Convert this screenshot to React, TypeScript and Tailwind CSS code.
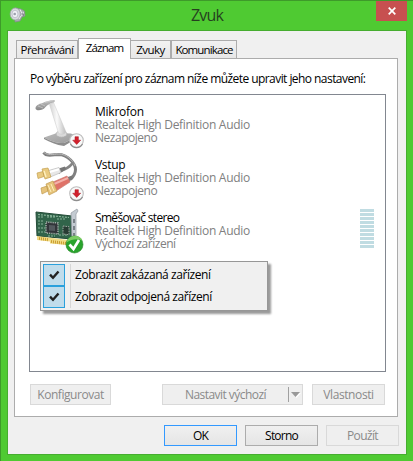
import React from "react";

const CONTROL = "flex h-[21px] items-center justify-center border text-[12px] leading-none whitespace-nowrap";
const TAB = "flex h-[18px] items-center justify-center border border-b-0 border-[#acacac] bg-gradient-to-b from-[#f2f2f2] to-[#e7e7e7]";

function DownBadge() {
  return (
    <g>
      <circle cx="42.5" cy="42.5" r="6.8" fill="#f8f8f8" stroke="#bdbdbd" strokeWidth="1.1" />
      <path d="M36.5 46a6.8 6.8 0 0 0 12 0" fill="none" stroke="#8e8e8e" strokeWidth="1.2" />
      <path d="M41 38.7h3.4v3.5h2.3l-4 4.3-4-4.3H41z" fill="#d2202c" stroke="#a9141f" strokeWidth=".5" />
    </g>
  );
}

function Microphone() {
  return (
    <svg width="50" height="53" viewBox="0 0 50 53" className="block">
      <defs>
        <linearGradient id="stem" x1="0" x2="1">
          <stop stopColor="#d0d0d0" /><stop offset=".45" stopColor="#fafafa" /><stop offset="1" stopColor="#bdbdbd" />
        </linearGradient>
        <linearGradient id="foot" x1="0" x2="1" y2="1">
          <stop stopColor="#bababa" /><stop offset="1" stopColor="#9a9a9a" />
        </linearGradient>
        <linearGradient id="head" x1="0" x2="0" y2="1">
          <stop stopColor="#c4c4c4" /><stop offset="1" stopColor="#858585" />
        </linearGradient>
      </defs>
      <path d="M10 39.5l13-4.5 14 .5 6 3-13 6.5c-8 0-14-2-20-5.5z" fill="url(#foot)" />
      <path d="M10 39.5c6 3.5 12 5.5 20 5.5l10-5v2l-10 6c-8-1-14-4-20-7z" fill="#8d8d8d" />
      <ellipse cx="27.5" cy="36" rx="5.5" ry="3.2" fill="#dadada" stroke="#ababab" strokeWidth=".7" />
      <path d="M15.5 6.5l4-2 12.500 29.500c-1.500 2.500-5 3-7.500 1z" fill="url(#stem)" stroke="#c8c8c8" strokeWidth=".5" />
      <path d="M1.500 10.500c0-3 3-4.500 7-5.500 4-1.800 8-3.200 12-3 .8.800.5 1.800-1 2.500-4 1-6 2.500-8 4.500-2.500 3.500-9.500 4.500-10 1.500z" fill="url(#head)" />
      <path d="M4 8l5 2M7 6l4 2M11 4.500l8-2" stroke="#cfcfcf" strokeWidth=".7" />
      <DownBadge />
    </svg>
  );
}

function LineIn() {
  return (
    <svg width="50" height="53" viewBox="0 0 50 53" className="block">
      <path d="M9.500 1.500c3 4 8 2.500 15 2 9 0 17 9 17 15 0 4-2 7-5 10" fill="none" stroke="#808080" strokeWidth="3" />
      <path d="M10 1.500c4 3 8 2 15 1.500 7 0 14 6 16 12" fill="none" stroke="#bdbdbd" strokeWidth=".9" />
      <path d="M39 11c-2 5-6 6-12 9" fill="none" stroke="#858585" strokeWidth="2.6" />
      <path d="M23 18l8-2.500 1 2.500-7 5z" fill="#777" />
      <path d="M13 20l12-3.500 2 5-12 5z" fill="#e7e7e7" stroke="#bbb" strokeWidth=".7" />
      <path d="M14 21.500l11-3.200" stroke="#fff" strokeWidth="2" />
      <path d="M3 22l6-1.500 1 5-6 2zM8 18l6-1 3 9-6 2z" fill="#e9ca80" stroke="#c4a050" strokeWidth=".7" />
      <path d="M10 20l2 6" stroke="#fff0be" strokeWidth="1.500" />
      <path d="M31 27l7-2.500 1 3-6 5z" fill="#777" />
      <path d="M19 31l14-6 3 6-14 9z" fill="#df7268" stroke="#cd8178" strokeWidth=".7" />
      <path d="M20 33l14-6" stroke="#f3b1a9" strokeWidth="2" />
      <path d="M7 37l6-2 1 5-6 3zM12 33l7-3 4 10-8 4z" fill="#e6c37b" stroke="#c19c50" strokeWidth=".7" />
      <path d="M14 34l3 7M17 33l3 7" stroke="#fff1bd" />
      <DownBadge />
    </svg>
  );
}

function SoundCard() {
  return (
    <svg width="50" height="53" viewBox="0 0 50 53" className="block">
      <path d="M2 8l36 4v23L3 32z" fill="#31644a" stroke="#244c38" />
      <path d="M4 10.500l31 3M4 13h6M13 13h8M23 15h8M4 17h5M4 20h6M4 24h7M4 28h7M25 31h8M14 32h7" stroke="#8ab49a" strokeWidth="1.2" strokeDasharray="2 1" />
      <path d="M12 18l12 1v11l-12-1z" fill="#32363a" stroke="#a4afa9" strokeWidth="1.500" strokeDasharray="1.2 1" />
      <path d="M15 21l6 .5V27l-6-.5z" fill="#535a5e" />
      <path d="M29 22l6 .7v8l-6-.7z" fill="#273c33" stroke="#a0aaa3" strokeDasharray="1.500 1" />
      <path d="M37 9l6-4 1 2-2 3v25l-4 3z" fill="#c4cbd2" stroke="#9399a0" strokeWidth=".7" />
      <path d="M40 15v4M40 22v4M40 29v3" stroke="#626970" strokeWidth="1.500" />
      <path d="M3 32l31 4v5L16 39.500v-2L3 36z" fill="#f2dc85" />
      <path d="M5 34.500l9 1.200M17 37.500l15 2" stroke="#c99b2e" strokeWidth="3" strokeDasharray="1 1" />
      <circle cx="40.500" cy="40.500" r="8.500" fill="#29a32c" stroke="#248526" strokeWidth=".6" />
      <path d="M32.500 38.500c2-8 13-9 16-2-5-2-10-2-16 2z" fill="#7bcc64" />
      <path d="M35.500 40.500l4 4.500 5.500-9" fill="none" stroke="#fff" strokeWidth="2.7" />
    </svg>
  );
}

function Device({ name, status, nameClass, statusClass, children }: {
  name: string; status: string; nameClass: string; statusClass: string; children: React.ReactNode;
}) {
  return (
    <div className="flex h-[53px]">
      <div className="w-[61px] shrink-0">{children}</div>
      <div className="flex flex-col whitespace-nowrap pt-[7px] text-[12px] leading-[13px] text-[#808080]">
        <span className={`text-black ${nameClass}`}>{name}</span>
        <span className="tracking-[-0.3px]">Realtek High Definition Audio</span>
        <span className={statusClass}>{status}</span>
      </div>
    </div>
  );
}

function MenuItem({ children }: { children: React.ReactNode }) {
  return (
    <div className="flex h-[22px]">
      <div className="flex w-[22px] items-center justify-center border border-[#2aa0dc] bg-[#c0dceb]">
        <svg width="11" height="10" viewBox="0 0 11 10"><path d="M1 4.6l3 3.2L9.500 1.500" fill="none" stroke="#222" strokeWidth="2.4" /></svg>
      </div>
      <div className="ml-[5px] w-px bg-[#d7d7d7]" />
      <span className="ml-1 whitespace-nowrap text-[12px] leading-[22px] tracking-[-0.43px]">{children}</span>
    </div>
  );
}

export default function App() {
  return (
    <main className="flex h-[461px] w-[413px] flex-col border-l border-t border-[#3e9a2a] bg-[#4fca32] font-['Open_Sans','Noto_Sans',sans-serif] text-black">
      <header className="flex h-[29px] shrink-0">
        <div className="w-[190px] pl-[8px] pt-[5px]">
          <svg width="18" height="17" viewBox="0 0 18 17">
            <path d="M6 2l6 1 3.500 2 .5 5-3 1-2 4-5 1z" fill="#a9adb2" stroke="#858a8c" strokeWidth=".7" />
            <ellipse cx="6.200" cy="8" rx="5" ry="6" fill="#d9dae0" stroke="#a3a6ae" strokeWidth=".8" />
            <ellipse cx="6" cy="8" rx="3" ry="3.800" fill="#f0f0f6" stroke="#b6b9c4" strokeWidth=".8" />
            <circle cx="5.700" cy="8" r="1.300" fill="#9ba0ad" />
            <path d="M11 3.500l2 4M14.500 6l-2 4M10 13l2-3" stroke="#e8eaec" />
            <path d="M13.500 7.500l1 2" stroke="#5d6266" />
          </svg>
        </div>
        <h1 className="w-[185px] pt-px text-[16px] leading-[27px] tracking-[-0.8px] text-[#263f20]">Zvuk</h1>
        <button className="flex h-5 w-[31px] items-center justify-center bg-[#c75050]" aria-label="Zavřít">
          <svg width="8" height="8" viewBox="0 0 8 8"><path d="M.7.7l6.6 6.6M7.3.7L.7 7.3" stroke="#fff" strokeWidth="1.700" /></svg>
        </button>
      </header>

      <section className="ml-[6px] h-[425px] w-[400px] shrink-0 border border-[#46ad2f] bg-[#f0f0f0] pl-[6px] pt-[7px]">
        <nav className="flex h-[20px] items-end whitespace-nowrap pl-[2px] text-[11.5px] leading-none">
          <div className={`${TAB} w-[62px] tracking-[-0.55px]`}>Přehrávání</div>
          <div className="relative z-10 -mb-px flex h-[21px] w-[53px] items-center justify-center border border-b-0 border-[#acacac] bg-white pb-[2px] tracking-[-0.8px]">Záznam</div>
          <div className={`${TAB} w-[40px] border-l-0 tracking-[-0.55px]`}>Zvuky</div>
          <div className={`${TAB} w-[66px] tracking-[-0.88px]`}>Komunikace</div>
        </nav>

        <div className="h-[359px] w-[384px] border border-[#acacac] bg-white pl-[14px] pt-[12px]">
          <p className="h-[23px] whitespace-nowrap pl-px text-[12px] leading-[15px] tracking-[-0.56px]">Po výběru zařízení pro záznam níže můžete upravit jeho nastavení:</p>
          <div className="relative h-[278px] w-[357px] border border-[#828790] bg-white pl-[4px] pt-[3px]">
            <Device name="Mikrofon" status="Nezapojeno" nameClass="tracking-[-0.25px]" statusClass="tracking-[-0.48px]"><Microphone /></Device>
            <Device name="Vstup" status="Nezapojeno" nameClass="tracking-[-0.3px]" statusClass="tracking-[-0.48px]"><LineIn /></Device>
            <div className="flex">
              <div className="w-[326px]">
                <Device name="Směšovač stereo" status="Výchozí zařízení" nameClass="tracking-[-0.68px]" statusClass="tracking-[-0.48px]"><SoundCard /></Device>
              </div>
              <div className="flex flex-col gap-px pt-[5px]">
                {Array.from({ length: 10 }, (_, i) => <i key={i} className="block h-[3px] w-[14px] bg-[#c0dce2]" />)}
              </div>
            </div>
            <div className="absolute left-[10px] top-[166px] h-[50px] w-[228px] border border-[#979797] bg-[#f0f0f0] p-[2px] shadow-[3px_3px_2px_#9a9a9a]">
              <MenuItem>Zobrazit zakázaná zařízení</MenuItem>
              <MenuItem>Zobrazit odpojená zařízení</MenuItem>
            </div>
          </div>

          <div className="mt-[12px] flex pl-px text-[#8a8a8a]">
            <button className={`${CONTROL} w-[81px] border-[#d9d9d9] bg-[#efefef] tracking-[-0.45px]`}>Konfigurovat</button>
            <button className={`${CONTROL} ml-[51px] w-[141px] border-[#d9d9d9] bg-[#efefef] tracking-[-0.55px]`}>
              <span className="flex-1 pl-0">Nastavit výchozí</span>
              <i className="h-[15px] w-px bg-[#a0a0a0]" />
              <svg width="13" height="8" viewBox="0 0 13 8"><path d="M3 2h9L7.500 7z" fill="#fff" /><path d="M2 1h9L6.500 6z" fill="#999" /></svg>
            </button>
            <button className={`${CONTROL} ml-[9px] w-[73px] border-[#d9d9d9] bg-[#efefef] tracking-[-0.4px]`}>Vlastnosti</button>
          </div>
        </div>

        <footer className="flex gap-[8px] pl-[150px] pt-[8px]">
          <button className={`${CONTROL} w-[73px] border-[#3399ff] bg-gradient-to-b from-[#f0f0f0] to-[#e5e5e5] tracking-[-0.8px]`}>OK</button>
          <button className={`${CONTROL} w-[73px] border-[#acacac] bg-gradient-to-b from-[#f0f0f0] to-[#e5e5e5] tracking-[-0.8px]`}>Storno</button>
          <button className={`${CONTROL} w-[73px] border-[#d9d9d9] bg-[#efefef] text-[#8a8a8a] tracking-[-0.6px]`}>Použít</button>
        </footer>
      </section>
    </main>
  );
}
